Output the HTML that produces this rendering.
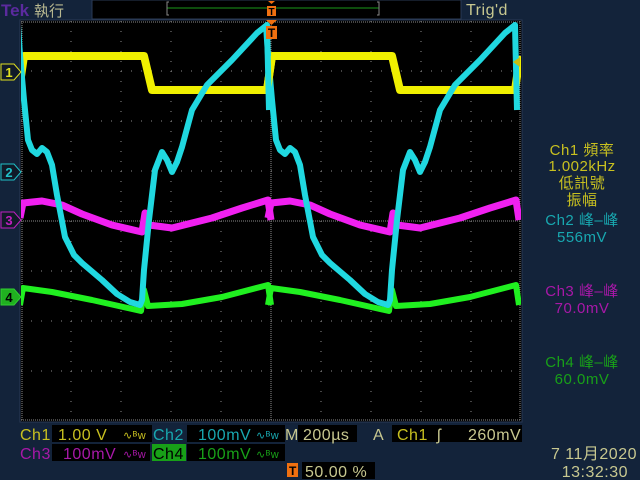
<!DOCTYPE html>
<html><head><meta charset="utf-8"><style>
html,body{margin:0;padding:0;background:#13233a;width:640px;height:480px;overflow:hidden}
svg{display:block}
text{font-family:"Liberation Sans","Noto Sans CJK TC",sans-serif}
</style></head><body>
<svg width="640" height="480" viewBox="0 0 640 480" xmlns="http://www.w3.org/2000/svg">
<defs><clipPath id="c"><rect x="21" y="21" width="500" height="400"/></clipPath></defs>
<rect width="640" height="480" fill="#13233a"/>
<text x="1" y="16" font-size="17" font-weight="bold" fill="#5b2a9e">Tek</text>
<text x="34" y="16" font-size="15" fill="#b8b890">執行</text>
<rect x="92" y="0" width="369" height="19" fill="#000" stroke="#2a3a55"/>
<line x1="167" y1="8" x2="379" y2="8" stroke="#1a9a1a" stroke-width="1"/>
<path d="M169,2 h-2 v13 h2 M377,2 h2 v13 h-2" stroke="#888" fill="none"/>
<path d="M268,1 h7 l-3.5,3z" fill="#f07010"/>
<rect x="267" y="6" width="9" height="10" fill="#f07010"/>
<text x="271.5" y="15" font-size="10" font-weight="bold" fill="#000" text-anchor="middle">T</text>
<text x="466" y="15" font-size="16" fill="#c8c890" letter-spacing="0.5">Trig'd</text>
<rect x="20" y="20" width="502" height="402" fill="#000" stroke="#2a3a55"/>
<g stroke="#8a8a8a" stroke-width="1" stroke-dasharray="1 9" fill="none">
<path d="M71,21V421M121,21V421M171,21V421M221,21V421M321,21V421M371,21V421M421,21V421M471,21V421"/>
<path d="M21,71H521M21,121H521M21,171H521M21,271H521M21,321H521M21,371H521"/>
</g>
<g stroke="#8a8a8a" stroke-width="1" stroke-dasharray="1 1" fill="none">
<path d="M271,21V421M21,221H521"/>
<path d="M21,22H521M21,420H521M22,21V421M520,21V421"/>
</g>
<g clip-path="url(#c)" fill="none" stroke-linejoin="round">
<g id="w">
<path d="M267,90 L272,56 L392,56 L400,90 L515,90 L520,56" stroke="#f0f000" stroke-width="8"/>
<path d="M268,218 L271,203 L290,201 L310,205 L330,214 L360,225 L390,232 L393,213 L397,225 L420,228 L460,218 L490,208 L516,200 L519,220" stroke="#f020f0" stroke-width="7"/>
<path d="M268,305 L271,288 L300,292 L340,300 L389,311 L392,290 L396,306 L430,304 L470,297 L516,285 L519,305" stroke="#20f020" stroke-width="6"/>
<path d="M266,25 L268,55 L272,100 L276,140 L280,150 L285,154 L290,148 L295,152 L300,165 L305,195 L313,237 L322,255 L330,263 L350,280 L365,294 L378,302 L388,305 L390,300 L392,270 L397,220 L403,170 L410,152 L415,160 L420,172 L425,162 L430,147 L440,110 L455,85 L480,60 L505,33 L515,25 L517,110" stroke="#20d8e0" stroke-width="6"/>
</g>
<use href="#w" transform="translate(-248,0)"/>
</g>
<path d="M266,20 h11 l-5.5,5z" fill="#f07010"/>
<rect x="266" y="26" width="11" height="13" fill="#f07010"/>
<text x="271.5" y="37" font-size="12" font-weight="bold" fill="#000" text-anchor="middle">T</text>
<path d="M513,62 l7,-5 v10z" fill="#c8c010"/>
<g font-size="13" font-weight="bold" text-anchor="middle">
<path d="M1,64 H14 L21,72 L14,80 H1Z" fill="#101a28" stroke="#e0e020"/><text x="9" y="77" fill="#e0e020">1</text>
<path d="M1,164 H14 L21,172 L14,180 H1Z" fill="#101a28" stroke="#20c0c8"/><text x="9" y="177" fill="#20c0c8">2</text>
<path d="M1,212 H14 L21,220 L14,228 H1Z" fill="#101a28" stroke="#c020c0"/><text x="9" y="225" fill="#c020c0">3</text>
<path d="M1,289 H14 L21,297 L14,305 H1Z" fill="#20b020" stroke="#30d030"/><text x="9" y="302" fill="#000">4</text>
</g>
<g font-size="15" text-anchor="middle" letter-spacing="0.5">
<text x="582" y="155" fill="#c8c020">Ch1 頻率</text>
<text x="582" y="171" fill="#c8c020">1.002kHz</text>
<text x="582" y="188" fill="#c8c020">低訊號</text>
<text x="582" y="205" fill="#c8c020">振幅</text>
<text x="582" y="225" fill="#18a8b0">Ch2 峰–峰</text>
<text x="582" y="242" fill="#18a8b0">556mV</text>
<text x="582" y="296" fill="#a818a8">Ch3 峰–峰</text>
<text x="582" y="313" fill="#a818a8">70.0mV</text>
<text x="582" y="367" fill="#18a018">Ch4 峰–峰</text>
<text x="582" y="384" fill="#18a018">60.0mV</text>
</g>
<g font-size="16" letter-spacing="0.5">
<rect x="52" y="425" width="100" height="17" fill="#000"/>
<rect x="187" y="425" width="98" height="17" fill="#000"/>
<rect x="298" y="425" width="59" height="17" fill="#000"/>
<rect x="392" y="425" width="130" height="17" fill="#000"/>
<rect x="52" y="444" width="98" height="17" fill="#000"/>
<rect x="152" y="444" width="34" height="17" fill="#18a018"/>
<rect x="187" y="444" width="98" height="17" fill="#000"/>
<rect x="302" y="462" width="73" height="17" fill="#000"/>
<rect x="287" y="463" width="11" height="14" fill="#f07010"/>
<text x="289" y="475" font-size="12" font-weight="bold" fill="#000">T</text>
<text x="20" y="440" fill="#c8c020">Ch1</text>
<text x="58" y="440" fill="#c8c020">1.00 V</text>
<text x="123" y="439" font-size="11" fill="#c8c020">∿ᴮw</text>
<text x="153" y="440" fill="#18a8b0">Ch2</text>
<text x="198" y="440" fill="#18a8b0">100mV</text>
<text x="256" y="439" font-size="11" fill="#18a8b0">∿ᴮw</text>
<text x="285" y="440" fill="#c8c890">M</text>
<text x="303" y="440" fill="#c8c890">200µs</text>
<text x="373" y="440" fill="#c8c890">A</text>
<text x="397" y="440" fill="#c8c020">Ch1</text>
<text x="437" y="440" fill="#c8c890">ʃ</text>
<text x="468" y="440" fill="#c8c890">260mV</text>
<text x="20" y="459" fill="#a818a8">Ch3</text>
<text x="63" y="459" fill="#a818a8">100mV</text>
<text x="123" y="458" font-size="11" fill="#a818a8">∿ᴮw</text>
<text x="153" y="459" fill="#000">Ch4</text>
<text x="198" y="459" fill="#18a018">100mV</text>
<text x="256" y="458" font-size="11" fill="#18a018">∿ᴮw</text>
<text x="305" y="477" fill="#c8c890">50.00 %</text>
<text x="637" y="459" fill="#c8c890" text-anchor="end">7 11月2020</text>
<text x="628" y="477" fill="#c8c890" text-anchor="end">13:32:30</text>
</g>
</svg>
</body></html>
